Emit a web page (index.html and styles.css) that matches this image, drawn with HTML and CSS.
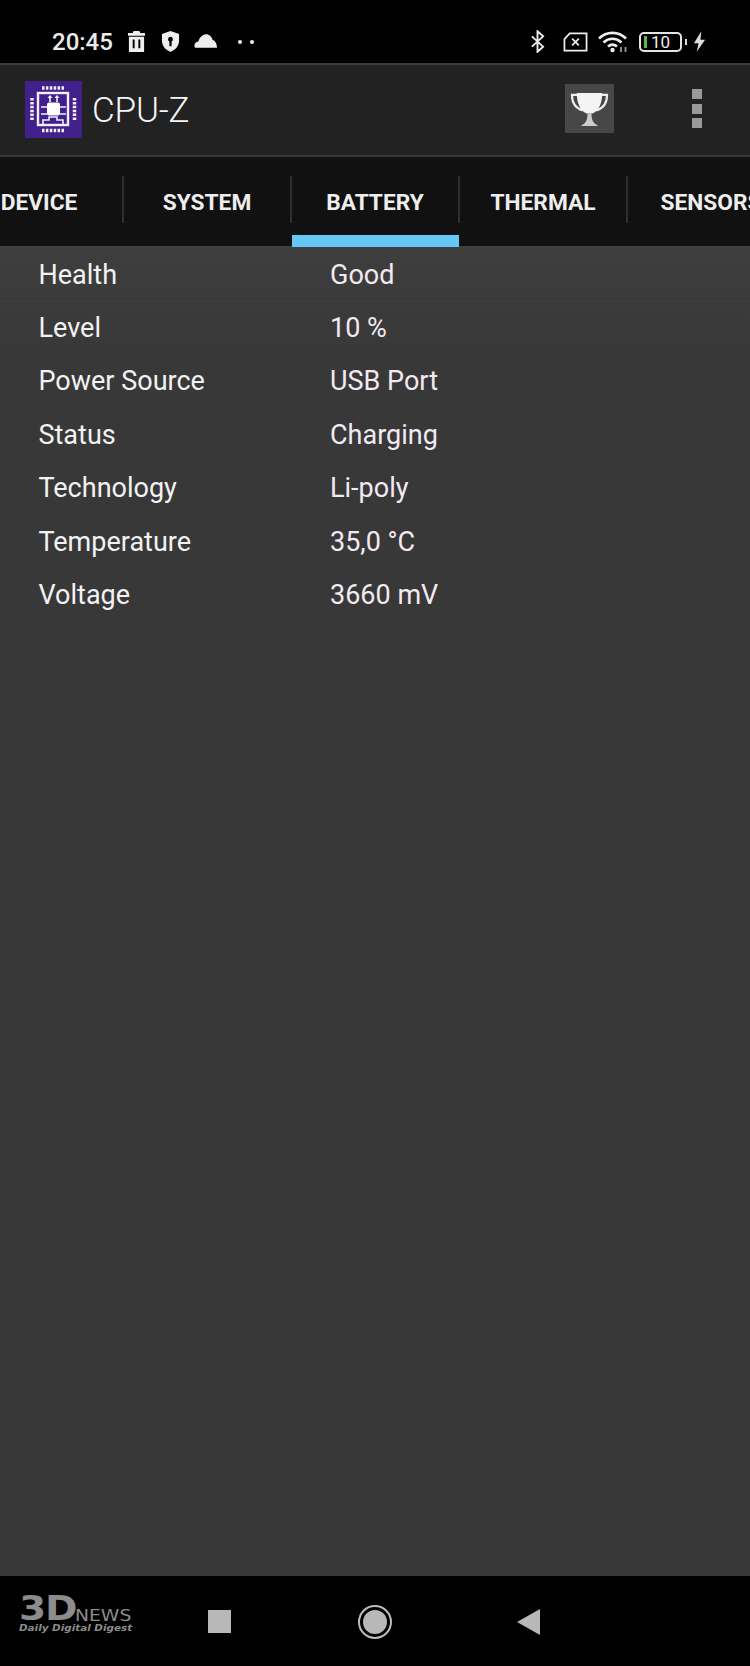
FILE: index.html
```html
<!DOCTYPE html>
<html lang="en">
<head>
<meta charset="utf-8">
<title>CPU-Z</title>
<link rel="stylesheet" href="styles.css">
</head>
<body>
<div class="screen">
  <header class="status">
    <div class="status-left">
      <span class="time">20:45</span>
      <svg class="ic ic-trash" viewBox="0 0 20 22"><path fill="#eee" fill-rule="evenodd" d="M7 0h6l1 2h5v3H1V2h5zM2 6h16v16H2zM6 9v9h2V9zm6 0v9h2V9z"/></svg>
      <svg class="ic ic-shield" viewBox="0 0 20 22"><path fill="#eee" fill-rule="evenodd" d="M10 0l9 3v7c0 6-4 10-9 12C5 20 1 16 1 10V3zm0 6a2.600 2.600 0 0 0-1.200 4.900V16h2.400v-5.100A2.600 2.600 0 0 0 10 6z"/></svg>
      <svg class="ic ic-cloud" viewBox="0 0 24 14"><path fill="#eee" d="M1 14c-1.500-3 0-6 3.500-6.500C6 3 9 0 12.500 0c3.500 0 6 2.500 7 6 2.500.5 4.500 4 4.500 8z"/></svg>
      <span class="dots"><i></i><i></i></span>
    </div>
    <div class="status-right">
      <svg class="ic ic-bt" viewBox="0 0 16 24"><path fill="none" stroke="#eee" stroke-width="2" d="M2 6.500l12 11-6 5.500V1l6 5.500-12 11"/></svg>
      <svg class="ic ic-sim" viewBox="0 0 26 20"><path fill="none" stroke="#eee" stroke-width="1.800" d="M7 1h17.500v18H1.500V7z"/><path fill="none" stroke="#eee" stroke-width="1.800" d="M9.500 6.500l7 7m0-7l-7 7"/></svg>
      <svg class="ic ic-wifi" viewBox="0 0 30 22"><g fill="none" stroke="#eee" stroke-width="2.600"><path d="M1 7.500C8.500 0 20.500 0 28 7.500"/><path d="M5.500 11.500c5.500-5 12.500-5 18 0"/><path d="M10 15.500c3-2.500 6-2.500 9 0"/></g><circle cx="14.500" cy="19" r="2.200" fill="#eee"/><path d="M23 21v-5M27.500 21v-5" stroke="#999" stroke-width="1.800"/></svg>
      <div class="battery"><span class="battery-fill"></span><span class="battery-num">10</span></div>
      <span class="battery-cap"></span>
      <svg class="ic ic-bolt" viewBox="0 0 14 22"><path fill="#ddd" d="M9 0L1 13h5l-2 9 9-13H8z"/></svg>
    </div>
  </header>

  <div class="appbar">
    <div class="brand">
      <svg class="logo" viewBox="0 0 57 57">
        <rect width="57" height="57" fill="#41208c"/>
        <g fill="none" stroke="#f2effa">
          <rect x="13" y="12" width="30" height="32" stroke-width="2.400"/>
          <path d="M25 15v6M32 15v6M16 26h6M16 33h6M35 26h6M35 33h6M18 43v-4h6v-3h8v3h6v4" stroke-width="1.600"/>
          <path d="M17 7h23M17 49.500h23M7 17v23M49.500 17v23" stroke-width="3.500" stroke-dasharray="2.500 1.400"/>
        </g>
        <path fill="#f2effa" d="M22.500 17l2.500-3 2.500 3zM29.500 17l2.500-3 2.500 3z"/>
        <rect x="22" y="21.500" width="13" height="13" rx="2" fill="#fff"/>
      </svg>
      <span class="app-title">CPU-Z</span>
    </div>
    <div class="actions">
      <div class="trophy">
        <svg viewBox="0 0 40 40"><path fill="none" stroke="#eee" stroke-width="2.200" d="M8 6H2c0 8 4 14 11 16M32 6h6c0 8-4 14-11 16"/><path fill="#f4f4f4" d="M7 4h26c0 10-3 18-10 21H17C10 22 7 14 7 4z"/><path fill="#ccc" d="M18 25h4c0 5 1 8 3 10l4 3H11l4-3c2-2 3-5 3-10z"/></svg>
      </div>
      <div class="menu"><i></i><i></i><i></i></div>
    </div>
  </div>

  <nav class="tabs">
    <div class="tab">DEVICE</div>
    <div class="tab">SYSTEM</div>
    <div class="tab active">BATTERY</div>
    <div class="tab">THERMAL</div>
    <div class="tab">SENSORS</div>
  </nav>

  <main class="content">
    <div class="row"><span class="key">Health</span><span class="val">Good</span></div>
    <div class="row"><span class="key">Level</span><span class="val">10 %</span></div>
    <div class="row"><span class="key">Power Source</span><span class="val">USB Port</span></div>
    <div class="row"><span class="key">Status</span><span class="val">Charging</span></div>
    <div class="row"><span class="key">Technology</span><span class="val">Li-poly</span></div>
    <div class="row"><span class="key">Temperature</span><span class="val">35,0 °C</span></div>
    <div class="row"><span class="key">Voltage</span><span class="val">3660 mV</span></div>
  </main>

  <footer class="nav">
    <div class="wm">
      <div class="wm-top"><span class="wm-3d">3D</span><span class="wm-news">NEWS</span></div>
      <div class="wm-sub">Daily Digital Digest</div>
    </div>
    <span class="nav-square"></span>
    <span class="nav-home"><i></i></span>
    <svg class="nav-back" viewBox="0 0 24 26"><path fill="#b8b8b8" d="M23 0v26L0 13z"/></svg>
  </footer>
</div>
</body>
</html>
```

FILE: styles.css
```css
* { box-sizing: border-box; }
html, body { margin: 0; padding: 0; background: #383838; }
.screen { width: 750px; height: 1666px; display: flex; flex-direction: column; overflow: hidden; font-family: Roboto, sans-serif; }

.status { height: 63px; flex: none; background: #000; display: flex; justify-content: space-between; align-items: center; padding: 20px 0 0 52px; color: #eee; }
.status-left, .status-right { display: flex; align-items: center; }
.status-right { padding-right: 44px; }
.time { font-size: 24px; font-weight: 500; color: #eaeaea; margin-right: 14px; }
.ic { display: block; flex: none; }
.ic-trash { width: 19px; height: 21px; margin-right: 15px; }
.ic-shield { width: 19px; height: 21px; margin-right: 14px; }
.ic-cloud { width: 23px; height: 14px; margin-right: 21px; margin-top: -2px; }
.dots { display: flex; gap: 8px; }
.dots i { width: 4px; height: 4px; border-radius: 50%; background: #eee; }
.ic-bt { width: 15px; height: 23px; margin-right: 18px; }
.ic-sim { width: 25px; height: 20px; margin-right: 10px; }
.ic-wifi { width: 30px; height: 22px; margin-right: 11px; }
.battery { width: 43px; height: 20px; border: 2px solid #e4e4e4; border-radius: 5px; display: flex; align-items: center; padding-left: 3px; }
.battery-fill { width: 3px; height: 12px; background: #5cb84a; margin-right: 4px; }
.battery-num { font-size: 17px; color: #eee; line-height: 16px; }
.battery-cap { width: 2px; height: 6px; background: #ddd; margin: 0 6px 0 3px; }
.ic-bolt { width: 13px; height: 21px; }

.appbar { height: 94px; flex: none; background: #222; border-top: 2px solid #3c3c3c; border-bottom: 2px solid #383838; display: flex; justify-content: space-between; align-items: center; padding: 0 48px 0 25px; }
.brand { display: flex; align-items: center; gap: 10px; }
.logo { width: 57px; height: 57px; display: block; margin-top: -2px; }
.app-title { font-size: 35px; font-weight: 300; color: #f6f6f6; letter-spacing: -.2px; }
.actions { display: flex; align-items: center; gap: 78px; }
.trophy { width: 49px; height: 49px; background: #474747; padding: 5px; margin-top: -4px; }
.trophy svg { display: block; width: 39px; height: 39px; }
.menu { display: flex; flex-direction: column; gap: 4.500px; margin-top: -3px; }
.menu i { display: block; width: 10px; height: 10px; background: #9a9a9a; }

.tabs { height: 89px; flex: none; background: #111; display: flex; margin-left: -45px; }
.tab { width: 168px; flex: none; position: relative; display: flex; justify-content: center; padding-top: 33px; font-size: 22.700px; font-weight: 700; color: #eee; line-height: 26px; white-space: nowrap; }
.tab::after { content: ""; position: absolute; right: -1px; top: 19px; width: 2px; height: 47px; background: #2e2e2e; }
.tab.active::before { content: ""; position: absolute; left: 1px; right: 0; bottom: -1px; height: 12px; background: #66c7f5; }

.content { flex: 1; background: linear-gradient(#3e3e3e, #383838 110px); }
.row { height: 53.400px; display: flex; align-items: center; border-bottom: 1px solid #353535; padding: 5px 0 0 38.500px; font-size: 27px; }
.key { width: 291.500px; flex: none; color: #f2f2f2; }
.val { color: #f3e9f3; }

.nav { height: 90px; flex: none; background: #000; position: relative; }
.wm { position: absolute; left: 19px; top: 19px; width: 116px; color: #8c8c8c; font-family: "DejaVu Sans", sans-serif; }
.wm-top { display: flex; align-items: flex-end; height: 27px; }
.wm-3d { font-size: 34px; font-weight: 700; line-height: 27px; transform: scaleX(1.150); transform-origin: left; width: 54px; letter-spacing: -1px; flex: none; }
.wm-news { font-size: 15px; line-height: 11px; transform: scaleX(1.250); transform-origin: left; margin-left: 2px; }
.wm-sub { font-size: 8.500px; font-style: italic; font-weight: 700; line-height: 10px; margin-top: 1px; white-space: nowrap; transform: scaleX(1.220); transform-origin: left; }
.nav-square { position: absolute; left: 208px; top: 34px; width: 23px; height: 23px; background: #b8b8b8; }
.nav-home { position: absolute; left: 358px; top: 29px; width: 34px; height: 34px; border: 2.500px solid #bdbdbd; border-radius: 50%; display: flex; align-items: center; justify-content: center; }
.nav-home i { display: block; width: 24px; height: 24px; border-radius: 50%; background: #b8b8b8; }
.nav-back { position: absolute; left: 517px; top: 33px; width: 24px; height: 26px; }
```
